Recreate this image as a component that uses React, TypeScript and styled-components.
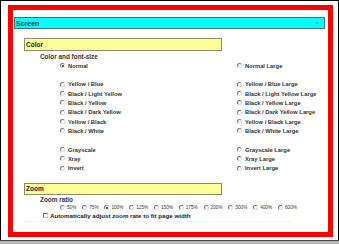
import React from "react";
import styled, { createGlobalStyle } from "styled-components";

const GlobalStyle = createGlobalStyle`
  html, body {
    margin: 0;
    padding: 0;
    background: #fff;
  }
  body {
    font-family: "Liberation Sans", Arial, sans-serif;
    color: #222;
  }
`;

const Window = styled.div`
  width: 339px;
  height: 244px;
  display: flex;
  flex-direction: column;
`;

const Frame = styled.div`
  flex: 1;
  border: 1px solid #000;
  border-bottom: none;
  padding: 4px 0 0 7px;
`;

const BottomEdge = styled.div`
  height: 4px;
  box-sizing: border-box;
  border-top: 1px solid #4a4a4a;
  background: #b8b8b8;
`;

const Panel = styled.div`
  width: 325px;
  height: 232px;
  box-sizing: border-box;
  border: 5px solid #ff0000;
  background: #fff;
`;

const TitleBar = styled.div`
  margin: 7px 3px 0 1px;
  height: 12px;
  box-sizing: border-box;
  border: 1px solid #3d7474;
  background: #00ffff;
  display: flex;
  align-items: center;
  justify-content: space-between;
  padding: 0 6px 0 1px;
  font-size: 7px;
  font-weight: bold;
  color: #1a3a3a;
`;

const TitleDot = styled.span`
  width: 2px;
  height: 2px;
  background: #4d7f96;
`;

const SectionHeader = styled.div<{ $top: number; $height: number }>`
  margin: ${({ $top }) => $top}px 0 0 11px;
  width: 198px;
  height: ${({ $height }) => $height}px;
  box-sizing: border-box;
  border: 1px solid #8c8c6a;
  background: #ffff99;
  display: flex;
  align-items: center;
  padding-left: 1px;
  font-size: 6.5px;
  font-weight: bold;
  color: #222;
`;

const SubHeading = styled.div<{ $top: number }>`
  margin-top: ${({ $top }) => $top}px;
  height: 8px;
  line-height: 8px;
  padding-left: 27px;
  font-size: 6.4px;
  font-weight: bold;
  color: #333;
`;

const OptionGrid = styled.div`
  display: grid;
  grid-template-columns: 177px 1fr;
  grid-auto-rows: 9.33px;
  padding-left: 47px;
`;

const Option = styled.label`
  display: flex;
  align-items: center;
  gap: 3px;
  font-size: 5.8px;
  font-weight: bold;
  color: #333;
  white-space: nowrap;
`;

const Radio = styled.span<{ $checked?: boolean }>`
  position: relative;
  width: 5px;
  height: 5px;
  flex: none;
  box-sizing: border-box;
  border-radius: 50%;
  border: 1px solid;
  border-color: #7a7a7a #dcdcdc #dcdcdc #7a7a7a;
  background: #fff;

  &::after {
    content: "";
    display: ${({ $checked }) => ($checked ? "block" : "none")};
    position: absolute;
    left: 0.5px;
    top: 0.5px;
    width: 2px;
    height: 2px;
    border-radius: 50%;
    background: #333;
  }
`;

const ZoomRow = styled.div`
  height: 8px;
  display: flex;
  align-items: center;
  padding-left: 47px;
`;

const ZoomItem = styled.label`
  display: flex;
  align-items: center;
  gap: 2px;
  margin-right: 5.8px;
  font-size: 4.7px;
  color: #333;
  white-space: nowrap;
`;

const CheckRow = styled.label`
  height: 8px;
  display: flex;
  align-items: center;
  gap: 2px;
  padding-left: 30px;
  font-size: 6.2px;
  font-weight: bold;
  color: #222;
  white-space: nowrap;
`;

const CheckBox = styled.span`
  width: 5px;
  height: 5px;
  flex: none;
  box-sizing: border-box;
  border: 1px solid;
  border-color: #7a7a7a #d0d0d0 #d0d0d0 #7a7a7a;
  background: #fff;
`;

const Divider = styled.div`
  margin: 1px 0 0 11px;
  width: 268px;
  border-bottom: 1px dotted #f2f0b0;
`;

type Cell = { label: string; checked?: boolean } | null;

const colorRows: [Cell, Cell][] = [
  [{ label: "Normal", checked: true }, { label: "Normal Large" }],
  [null, null],
  [{ label: "Yellow / Blue" }, { label: "Yellow / Blue Large" }],
  [{ label: "Black / Light Yellow" }, { label: "Black / Light Yellow Large" }],
  [{ label: "Black / Yellow" }, { label: "Black / Yellow Large" }],
  [{ label: "Black / Dark Yellow" }, { label: "Black / Dark Yellow Large" }],
  [{ label: "Yellow / Black" }, { label: "Yellow / Black Large" }],
  [{ label: "Black / White" }, { label: "Black / White Large" }],
  [null, null],
  [{ label: "Grayscale" }, { label: "Grayscale Large" }],
  [{ label: "Xray" }, { label: "Xray Large" }],
  [{ label: "Invert" }, { label: "Invert Large" }],
];

const zoomRatios = ["50%", "75%", "100%", "125%", "150%", "175%", "200%", "300%", "400%", "600%"];

const renderCell = (cell: Cell, key: string) =>
  cell ? (
    <Option key={key}>
      <Radio $checked={cell.checked} />
      {cell.label}
    </Option>
  ) : (
    <span key={key} />
  );

export default function App() {
  return (
    <Window>
      <GlobalStyle />
      <Frame>
        <Panel>
          <TitleBar>
            Screen
            <TitleDot />
          </TitleBar>

          <SectionHeader $top={9} $height={13}>Color</SectionHeader>
          <SubHeading $top={2}>Color and font-size</SubHeading>
          <OptionGrid>
            {colorRows.map(([left, right], i) => [
              renderCell(left, `l${i}`),
              renderCell(right, `r${i}`),
            ])}
          </OptionGrid>

          <SectionHeader $top={10} $height={12}>Zoom</SectionHeader>
          <SubHeading $top={1}>Zoom ratio</SubHeading>
          <ZoomRow>
            {zoomRatios.map((r) => (
              <ZoomItem key={r}>
                <Radio $checked={r === "100%"} />
                {r}
              </ZoomItem>
            ))}
          </ZoomRow>
          <CheckRow>
            <CheckBox />
            Automatically adjust zoom rate to fit page width
          </CheckRow>
          <Divider />
        </Panel>
      </Frame>
      <BottomEdge />
    </Window>
  );
}
